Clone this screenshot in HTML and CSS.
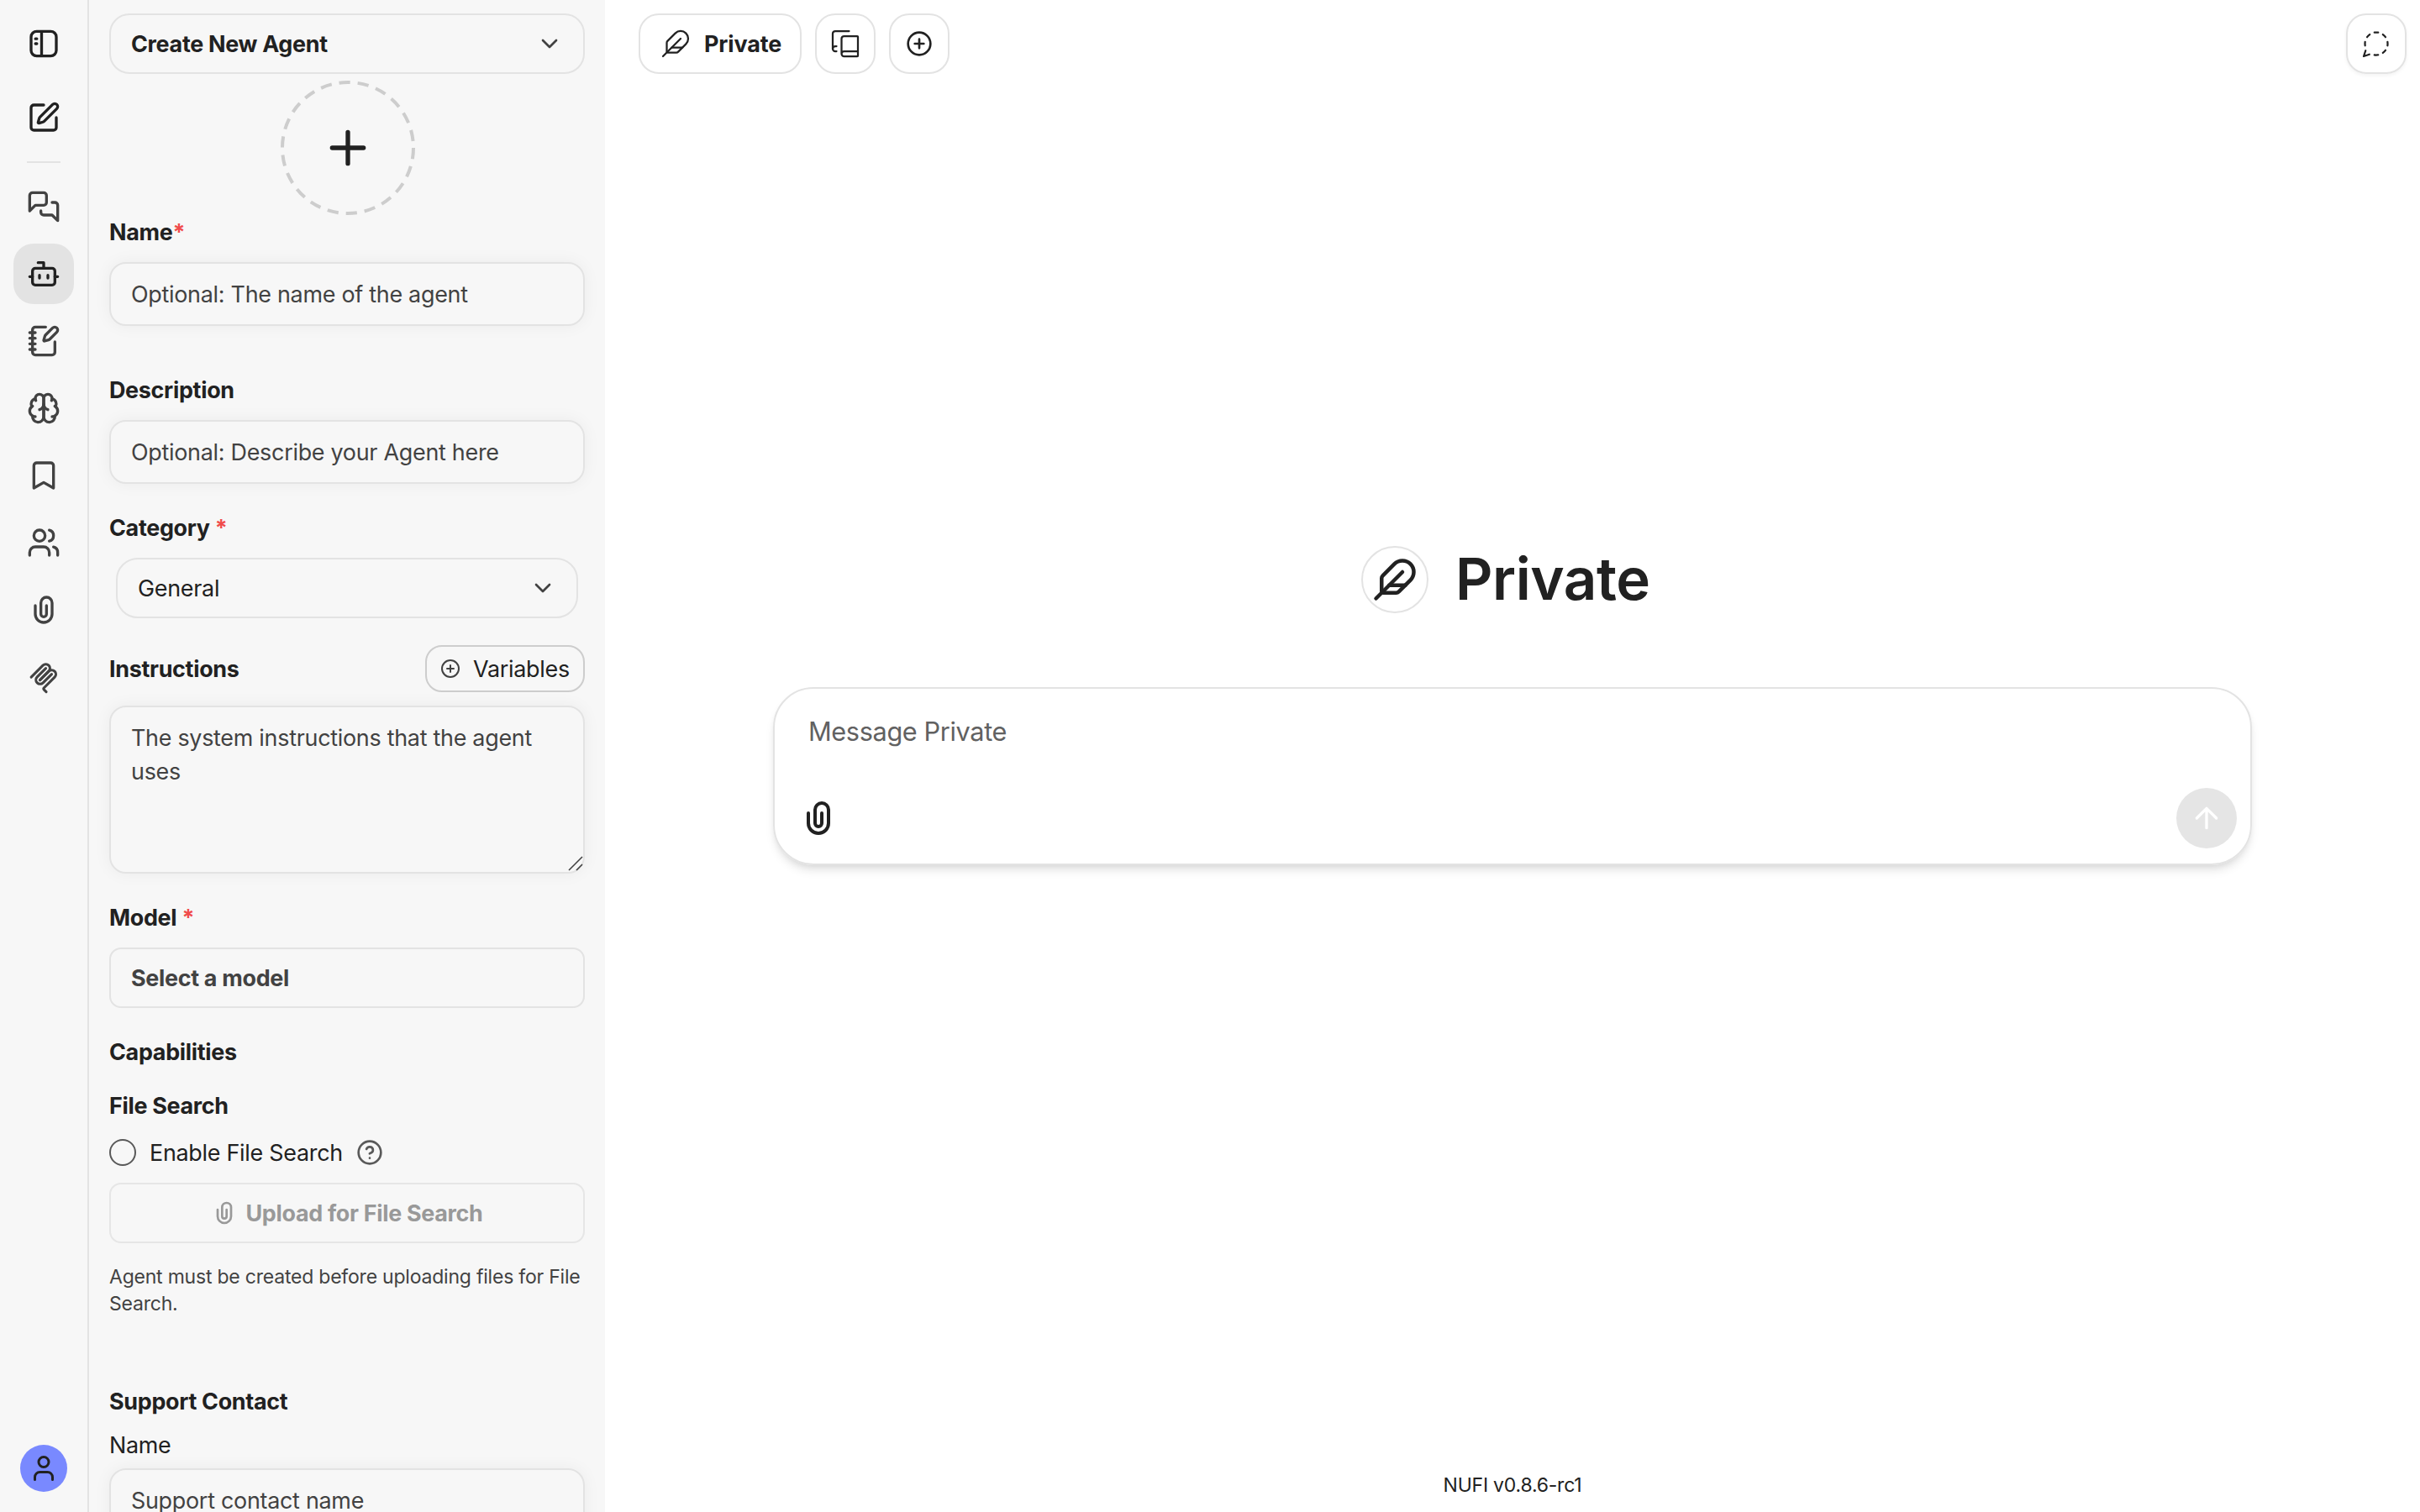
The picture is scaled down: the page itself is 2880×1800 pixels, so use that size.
FILE: index.html
```html
<!DOCTYPE html>
<html lang="en">
<head>
<meta charset="utf-8">
<title>NUFI</title>
<link rel="stylesheet" href="styles.css">
</head>
<body>
<svg class="sprite" aria-hidden="true">
  <symbol id="clip" viewBox="0 0 24 24"><path d="M6 9v6a6 6 0 0 0 12 0V7a4 4 0 0 0-8 0v8a2 2 0 0 0 4 0V9"/></symbol>
  <symbol id="feather" viewBox="0 0 24 24"><path d="M12.67 19a2 2 0 0 0 1.416-.588l6.154-6.172a6 6 0 0 0-8.49-8.49L5.586 9.914A2 2 0 0 0 5 11.328V18a1 1 0 0 0 1 1z"/><path d="M16 8 2 22"/><path d="M17.5 15H9"/></symbol>
  <symbol id="chevron" viewBox="0 0 24 24"><path d="m6 9 6 6 6-6"/></symbol>
  <symbol id="circle-plus" viewBox="0 0 24 24"><circle cx="12" cy="12" r="10"/><path d="M8 12h8M12 8v8"/></symbol>
</svg>
<div class="app">
  <nav class="rail">
    <a class="rail-item first"><svg class="icon i40" viewBox="0 0 24 24"><rect x="3" y="3.2" width="18" height="17.6" rx="4"/><path d="M10.5 3.5v17M6.1 8.5h1M6.1 12h1"/></svg></a>
    <a class="rail-item compose"><svg class="icon i40" viewBox="0 0 24 24"><path d="M12 3H5a2 2 0 0 0-2 2v14a2 2 0 0 0 2 2h14a2 2 0 0 0 2-2v-7"/><path d="M18.375 2.625a1 1 0 0 1 3 3l-9.013 9.014a2 2 0 0 1-.853.505l-2.873.84a.5.5 0 0 1-.62-.62l.84-2.873a2 2 0 0 1 .506-.852z"/></svg></a>
    <span class="rail-line"></span>
    <div class="rail-list">
      <a class="rail-item"><svg class="icon i40" viewBox="0 0 24 24"><path d="M14 9a2 2 0 0 1-2 2H6l-4 4V4a2 2 0 0 1 2-2h8a2 2 0 0 1 2 2z"/><path d="M18 9h2a2 2 0 0 1 2 2v11l-4-4h-6a2 2 0 0 1-2-2v-1"/></svg></a>
      <a class="rail-item active"><svg class="icon i40" viewBox="0 0 24 24"><path d="M12 8V4H8"/><rect x="4" y="8" width="16" height="12" rx="2"/><path d="M2 14h2M20 14h2M15 13v2M9 13v2"/></svg></a>
      <a class="rail-item"><svg class="icon i40" viewBox="0 0 24 24"><path d="M13.4 2H6a2 2 0 0 0-2 2v16a2 2 0 0 0 2 2h12a2 2 0 0 0 2-2v-7.4"/><path d="M2 6h4M2 10h4M2 14h4M2 18h4"/><path d="M21.378 5.626a1 1 0 1 0-3.004-3.004l-5.01 5.012a2 2 0 0 0-.506.854l-.837 2.87a.5.5 0 0 0 .62.62l2.87-.837a2 2 0 0 0 .854-.506z"/></svg></a>
      <a class="rail-item"><svg class="icon i40" viewBox="0 0 24 24"><path d="M12 5a3 3 0 1 0-5.997.125 4 4 0 0 0-2.526 5.77 4 4 0 0 0 .556 6.588A4 4 0 1 0 12 18Z"/><path d="M12 5a3 3 0 1 1 5.997.125 4 4 0 0 1 2.526 5.77 4 4 0 0 1-.556 6.588A4 4 0 1 1 12 18Z"/><path d="M15 13a4.5 4.5 0 0 1-3-4 4.5 4.5 0 0 1-3 4M17.599 6.5a3 3 0 0 0 .399-1.375M6.003 5.125A3 3 0 0 0 6.401 6.5M3.477 10.896a4 4 0 0 1 .585-.396M19.938 10.5a4 4 0 0 1 .585.396M6 18a4 4 0 0 1-1.967-.516M19.967 17.484A4 4 0 0 1 18 18"/></svg></a>
      <a class="rail-item"><svg class="icon i40" viewBox="0 0 24 24"><path d="m19 21-7-4-7 4V5a2 2 0 0 1 2-2h10a2 2 0 0 1 2 2z"/></svg></a>
      <a class="rail-item"><svg class="icon i40" viewBox="0 0 24 24"><path d="M16 21v-2a4 4 0 0 0-4-4H6a4 4 0 0 0-4 4v2"/><circle cx="9" cy="7" r="4"/><path d="M22 21v-2a4 4 0 0 0-3-3.87M16 3.13a4 4 0 0 1 0 7.75"/></svg></a>
      <a class="rail-item"><svg class="icon i40"><use href="#clip"/></svg></a>
      <a class="rail-item"><svg class="icon i40 mcp" viewBox="0 0 195 195"><path d="M25 97.853 92.882 29.971c9.373-9.373 24.569-9.373 33.941 0 9.373 9.372 9.373 24.568 0 33.941L75.558 115.177"/><path d="m76.265 114.47 50.558-50.558c9.373-9.373 24.569-9.373 33.941 0l.354.353c9.372 9.373 9.372 24.569 0 33.941l-61.393 61.393c-3.124 3.125-3.124 8.19 0 11.314l12.606 12.607"/><path d="m109.853 46.941-50.205 50.205c-9.372 9.373-9.372 24.569 0 33.941 9.373 9.373 24.569 9.373 33.941 0l50.205-50.205"/></svg></a>
    </div>
    <span class="avatar"><svg class="icon" viewBox="0 0 24 24"><path d="M19 21v-2a4 4 0 0 0-4-4H9a4 4 0 0 0-4 4v2"/><circle cx="12" cy="7" r="4"/></svg></span>
  </nav>

  <aside class="panel">
    <button class="select agent"><span class="text">Create New Agent</span><svg class="icon i32"><use href="#chevron"/></svg></button>
    <div class="upload-avatar">
      <svg class="ring" viewBox="0 0 160 160"><circle cx="80" cy="80" r="78"/></svg>
      <svg class="icon plus" viewBox="0 0 24 24"><path d="M5 12h14M12 5v14"/></svg>
    </div>
    <h3 class="label l-name">Name<em>*</em></h3>
    <div class="field">Optional: The name of the agent</div>
    <h3 class="label l-desc">Description</h3>
    <div class="field">Optional: Describe your Agent here</div>
    <h3 class="label l-cat">Category <em>*</em></h3>
    <button class="select category"><span class="text">General</span><svg class="icon i32"><use href="#chevron"/></svg></button>
    <div class="instr-row">
      <h3 class="label">Instructions</h3>
      <button class="variables"><svg class="icon"><use href="#circle-plus"/></svg><span class="text">Variables</span></button>
    </div>
    <div class="field area">The system instructions that the agent uses
      <svg class="grip" viewBox="0 0 18 18"><path d="M1 17 17 1M10 17l7-7"/></svg>
    </div>
    <h3 class="label l-model">Model <em>*</em></h3>
    <button class="select model"><span class="text">Select a model</span></button>
    <h3 class="label l-cap">Capabilities</h3>
    <h3 class="label l-file">File Search</h3>
    <div class="check-row"><span class="check"></span><span class="text">Enable File Search</span><svg class="icon i32 help" viewBox="0 0 24 24"><circle cx="12" cy="12" r="10"/><path d="M9.09 9a3 3 0 0 1 5.83 1c0 2-3 3-3 3M12 17h.01"/></svg></div>
    <button class="upload"><svg class="icon i32"><use href="#clip"/></svg><span class="text">Upload for File Search</span></button>
    <p class="hint">Agent must be created before uploading files for File Search.</p>
    <h3 class="label l-support">Support Contact</h3>
    <div class="sub">Name</div>
    <div class="field">Support contact name</div>
  </aside>

  <main class="main">
    <header class="topbar">
      <button class="pill private"><svg class="icon"><use href="#feather"/></svg><span class="text">Private</span></button>
      <button class="pill"><svg class="icon" viewBox="0 0 24 24"><path d="M2 16V4a2 2 0 0 1 2-2h11"/><path d="M22 18H11a2 2 0 1 0 0 4h10.5a.5.5 0 0 0 .5-.5v-15a.5.5 0 0 0-.5-.5H11a2 2 0 0 0-2 2v12"/><path d="M5 14H4a2 2 0 1 0 0 4h1"/></svg></button>
      <button class="pill"><svg class="icon i32 add"><use href="#circle-plus"/></svg></button>
      <button class="pill temp"><svg class="icon" viewBox="0 0 24 24"><path d="M13.5 3.1c-.5 0-1-.1-1.5-.1s-1 .1-1.5.1M19.3 6.8a10.45 10.45 0 0 0-2.1-2.1M20.9 13.5c.1-.5.1-1 .1-1.5s-.1-1-.1-1.5M17.2 19.3a10.45 10.45 0 0 0 2.1-2.1M10.5 20.9c.5.1 1 .1 1.5.1s1-.1 1.5-.1M3.5 17.5 2 22l4.5-1.5M3.1 10.5c0 .5-.1 1-.1 1.5s.1 1 .1 1.5M6.8 4.7a10.45 10.45 0 0 0-2.1 2.1"/></svg></button>
    </header>
    <section class="center">
      <div class="hero"><span class="hero-icon"><svg class="icon"><use href="#feather"/></svg></span><h1>Private</h1></div>
      <div class="composer">
        <div class="placeholder">Message Private</div>
        <div class="tools"><svg class="icon attach"><use href="#clip"/></svg><span class="send"><svg class="icon" viewBox="0 0 24 24"><path d="m5 12 7-7 7 7M12 19V5"/></svg></span></div>
      </div>
    </section>
    <footer class="footer">NUFI v0.8.6-rc1</footer>
  </main>
</div>
</body>
</html>
```
FILE: styles.css
```css
* { box-sizing: border-box; }
body { margin: 0; font-family: Inter, "Liberation Sans", sans-serif; font-size: 26.9px; letter-spacing: -.27px; line-height: 40px; color: #212121; background: #fff; }
h1, h3, p { margin: 0; }
button { font: inherit; letter-spacing: inherit; color: inherit; background: none; padding: 0; margin: 0; text-align: left; }
.sprite { display: none; }
.app { display: flex; width: 2880px; height: 1800px; overflow: hidden; }
.icon { display: block; flex: none; width: 36px; height: 36px; fill: none; stroke: currentColor; stroke-width: 2; stroke-linecap: round; stroke-linejoin: round; }
.i40 { width: 40px; height: 40px; }
.i32 { width: 32px; height: 32px; }
.text { white-space: nowrap; }

.rail { width: 106px; border-right: 2px solid #e3e3e3; background: #f7f7f7; display: flex; flex-direction: column; align-items: center; padding: 16px 0 24px; }
.rail-item { display: flex; align-items: center; justify-content: center; width: 72px; height: 72px; border-radius: 24px; color: #424242; }
.first, .compose { color: #212121; }
.compose { margin-top: 16px; }
.rail-line { width: 40px; height: 2px; background: #e3e3e3; margin: 16px 0; }
.rail-list { display: flex; flex-direction: column; gap: 8px; }
.active { background: #e3e3e3; color: #212121; }
.mcp { stroke-width: 15; }
.avatar { margin-top: auto; width: 56px; height: 56px; border-radius: 50%; background: #7989ff; display: flex; align-items: center; justify-content: center; }

.panel { width: 614px; height: 1800px; overflow: hidden; background: #f7f7f7; padding: 16px 24px 0; display: flex; flex-direction: column; }
.panel > * { flex: none; }
.select { display: flex; align-items: center; justify-content: space-between; height: 72px; border: 2px solid #e3e3e3; border-radius: 24px; padding: 0 24px; }
.select .icon { color: #424242; }
.agent, .model, .upload, .private, .label { font-weight: 670; letter-spacing: -.3px; }
.upload-avatar { width: 160px; height: 160px; margin: 8px 202px 0 204px; display: grid; place-items: center; }
.upload-avatar > * { grid-area: 1 / 1; }
.ring { width: 160px; height: 160px; fill: none; stroke: #cdcdcd; stroke-width: 4; stroke-dasharray: 13.3 8.977; }
.plus { width: 64px; height: 64px; }
.label { font-size: 26.9px; line-height: 40px; height: 40px; }
.label em { font-style: normal; font-weight: inherit; color: #f04b4b; }
.l-name { margin: 0 0 16px; }
.l-desc { margin: 56px 0 16px; }
.l-cat { margin: 32px 0 16px; }
.l-model { margin: 32px 0 16px; }
.l-cap { margin-top: 32px; }
.l-file { margin-top: 24px; }
.l-support { margin-top: 80px; }
.field { height: 76px; border: 2px solid #e3e3e3; border-radius: 20px; padding: 16px 24px; color: #424242; box-shadow: 0 0 20px rgba(0, 0, 0, .05); }
.category { margin: 0 8px; border-radius: 26px; }
.instr-row { display: flex; justify-content: space-between; align-items: center; margin: 32px 0 16px; }
.variables { width: 190px; height: 56px; border: 2px solid #cdcdcd; border-radius: 20px; display: flex; align-items: center; padding-left: 16px; gap: 15px; }
.variables .icon { width: 24px; height: 24px; color: #424242; }
.area { height: 200px; position: relative; }
.grip { position: absolute; right: 0; bottom: 1px; width: 18px; height: 18px; fill: none; stroke: #424242; stroke-width: 1.6; }
.model { border-radius: 14px; color: #424242; }
.check-row { display: flex; align-items: center; height: 40px; margin-top: 16px; }
.check { width: 32px; height: 32px; border: 2px solid #595959; border-radius: 50%; margin-right: 16px; }
.help { margin-left: 16px; color: #595959; }
.upload { height: 72px; margin-top: 16px; border: 2px solid #e6e6e6; border-radius: 14px; display: flex; align-items: center; justify-content: center; gap: 9px; color: #999; }
.hint { margin-top: 24px; font-size: 23px; letter-spacing: -.215px; line-height: 32px; color: #424242; }
.sub { margin: 12px 0 8px; }

.main { flex: 1; background: #fff; display: flex; flex-direction: column; }
.topbar { display: flex; gap: 16px; padding: 16px 16px 0 40px; }
.pill { width: 72px; height: 72px; border: 2px solid #e3e3e3; border-radius: 24px; display: flex; align-items: center; justify-content: center; }
.pill .icon { stroke-width: 1.5; }
.private { width: 194px; justify-content: flex-start; padding-left: 24px; gap: 16px; letter-spacing: -.1px; }
.pill .add { stroke-width: 2; }
.temp { margin-left: auto; box-shadow: 0 2px 4px rgba(0, 0, 0, .05); }
.center { display: flex; flex-direction: column; align-items: center; margin-top: 562px; }
.hero { display: flex; align-items: center; gap: 32px; width: 360px; height: 80px; }
.hero-icon { flex: none; width: 80px; height: 80px; border: 2px solid #e3e3e3; border-radius: 50%; display: flex; align-items: center; justify-content: center; }
.hero-icon .icon { width: 54px; height: 54px; }
h1 { font-size: 69px; line-height: 80px; font-weight: 640; letter-spacing: -.45px; margin-top: -2px; }
.composer { width: 1760px; height: 212px; margin-top: 88px; border: 2px solid #e3e3e3; border-radius: 48px; padding: 29px 16px 18px; display: flex; flex-direction: column; justify-content: space-between; box-shadow: 0 8px 12px -2px rgba(0,0,0,.1), 0 4px 8px -4px rgba(0,0,0,.1); }
.placeholder { padding-left: 24px; font-size: 30.7px; letter-spacing: -.37px; line-height: 44px; color: #616161; }
.tools { display: flex; align-items: center; justify-content: space-between; }
.attach { width: 48px; height: 48px; margin-left: 12px; }
.send { width: 72px; height: 72px; border-radius: 50%; background: #e5e5e5; color: #fff; display: flex; align-items: center; justify-content: center; }
.send .icon { width: 40px; height: 40px; }
.footer { margin-top: auto; height: 64px; text-align: center; font-size: 23px; letter-spacing: -.22px; line-height: 64px; }
```
